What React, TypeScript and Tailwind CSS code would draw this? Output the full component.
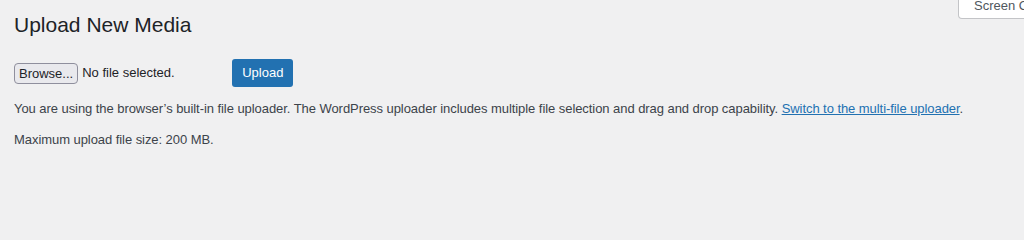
export default function App() {
  return (
    <div className="relative min-h-[240px] w-full overflow-hidden bg-[#f0f0f1] text-[#3c434a] [font-family:'Liberation_Sans',Arial,sans-serif]">
      <div className="absolute left-[958px] top-0 h-[19px] whitespace-nowrap rounded-b-[4px] border border-t-0 border-[#c3c4c7] bg-white px-[15px] text-[13px] leading-[12px] text-[#50575e]">
        Screen Options
      </div>
      <div className="px-[14px] pt-[10px]">
        <h1 className="text-[21px] font-normal leading-[29px] text-[#1d2327]">Upload New Media</h1>
        <div className="mt-[20px] flex items-center">
          <button className="h-[21px] rounded-[4px] border border-[#8f8f9d] bg-[#e9e9ed] px-[4px] text-[13px] leading-[19px] text-[#1d2327]">
            Browse...
          </button>
          <span className="ml-[4px] w-[150px] text-[13px] text-[#1d2327]">No file selected.</span>
          <button className="h-[28px] rounded-[3px] bg-[#2271b1] px-[10px] text-[13px] font-medium leading-[28px] text-white">
            Upload
          </button>
        </div>
        <p className="mt-[12px] text-[13px] leading-[19px] tracking-[-0.06px]">
          You are using the browser’s built-in file uploader. The WordPress uploader includes multiple file selection and drag and drop capability.{' '}
          <a href="#" className="text-[#2271b1] underline">Switch to the multi-file uploader</a>.
        </p>
        <p className="mt-[12px] text-[13px] leading-[19px] tracking-[-0.06px]">Maximum upload file size: 200 MB.</p>
      </div>
    </div>
  );
}
